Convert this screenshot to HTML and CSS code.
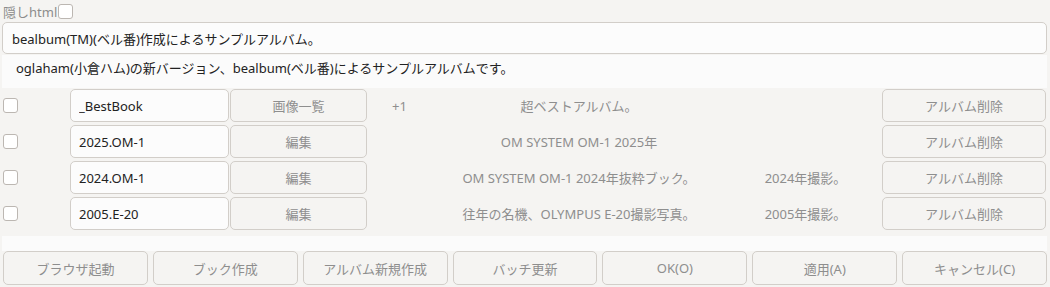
FILE: index.html
```html
<!DOCTYPE html>
<html lang="ja">
<head>
    <meta charset="UTF-8">
    <title>アルバム設定</title>
    <link rel="stylesheet" href="styles.css">
</head>
<body>
    <div class="header">
        <label class="hide-label">隠しhtml<input type="checkbox" class="check"></label>
    </div>

    <input type="text" class="title-input" value="bealbum(TM)(ベル番)作成によるサンプルアルバム。">
    <div class="note">oglaham(小倉ハム)の新バージョン、bealbum(ベル番)によるサンプルアルバムです。</div>

    <div class="albums">
        <div class="album-row">
            <div class="cell-check"><input type="checkbox" class="check"></div>
            <input type="text" class="name-input" value="_BestBook">
            <button class="btn">画像一覧</button>
            <div class="count">+1</div>
            <div class="desc">超ベストアルバム。</div>
            <div class="year"></div>
            <button class="btn">アルバム削除</button>
        </div>
        <div class="album-row">
            <div class="cell-check"><input type="checkbox" class="check"></div>
            <input type="text" class="name-input" value="2025.OM-1">
            <button class="btn">編集</button>
            <div class="count"></div>
            <div class="desc">OM SYSTEM OM-1 2025年</div>
            <div class="year"></div>
            <button class="btn">アルバム削除</button>
        </div>
        <div class="album-row">
            <div class="cell-check"><input type="checkbox" class="check"></div>
            <input type="text" class="name-input" value="2024.OM-1">
            <button class="btn">編集</button>
            <div class="count"></div>
            <div class="desc">OM SYSTEM OM-1 2024年抜粋ブック。</div>
            <div class="year">2024年撮影。</div>
            <button class="btn">アルバム削除</button>
        </div>
        <div class="album-row">
            <div class="cell-check"><input type="checkbox" class="check"></div>
            <input type="text" class="name-input" value="2005.E-20">
            <button class="btn">編集</button>
            <div class="count"></div>
            <div class="desc">往年の名機、OLYMPUS E-20撮影写真。</div>
            <div class="year">2005年撮影。</div>
            <button class="btn">アルバム削除</button>
        </div>
    </div>

    <div class="spacer"></div>

    <div class="actions">
        <button class="btn">ブラウザ起動</button>
        <button class="btn">ブック作成</button>
        <button class="btn">アルバム新規作成</button>
        <button class="btn">バッチ更新</button>
        <button class="btn">OK(O)</button>
        <button class="btn">適用(A)</button>
        <button class="btn">キャンセル(C)</button>
    </div>
</body>
</html>
```

FILE: styles.css
```css
body {
    margin: 0;
    background: #f5f4f2;
    font-family: "Noto Sans", "Noto Sans CJK JP", sans-serif;
    font-size: 13px;
    color: #333;
}

.header {
    height: 22px;
    padding-left: 3px;
}

.hide-label {
    display: flex;
    align-items: center;
    height: 22px;
    color: #8c8c8c;
    font-size: 13px;
}

.hide-label .check {
    margin-left: 1px;
}

.check {
    appearance: none;
    -webkit-appearance: none;
    width: 15px;
    height: 15px;
    margin: 0;
    border: 1px solid #bcb7b2;
    border-radius: 3px;
    background: #fff;
}

.title-input {
    display: block;
    box-sizing: border-box;
    width: 1045px;
    height: 32px;
    margin: 0 0 0 2px;
    padding: 0 9px;
    border: 1px solid #d2cec9;
    border-radius: 5px;
    background: #fcfcfc;
    font-family: inherit;
    font-size: 13px;
    color: #222;
}

.note {
    width: 1045px;
    height: 33px;
    margin: 1px 0 0 2px;
    padding-left: 14px;
    box-sizing: border-box;
    background: #fbfbfb;
    line-height: 26px;
    color: #222;
}

.albums {
    display: flex;
    flex-direction: column;
    gap: 3px;
    padding: 1px 0 6px 2px;
}

.album-row {
    display: grid;
    grid-template-columns: 68px 160px 137px 94px 236px 185px 164px;
    align-items: center;
    height: 33px;
}

.cell-check {
    display: flex;
    align-items: center;
    padding-left: 1px;
}

.name-input {
    box-sizing: border-box;
    width: 159px;
    height: 33px;
    padding: 0 8px;
    border: 1px solid #d2cec9;
    border-radius: 5px;
    background: #fcfcfc;
    font-family: inherit;
    font-size: 13px;
    color: #222;
}

.btn {
    box-sizing: border-box;
    height: 33px;
    border: 1px solid #d2cec9;
    border-radius: 5px;
    background: #f5f4f2;
    font-family: inherit;
    font-size: 13px;
    color: #8e8e8e;
    padding: 0;
}

.album-row .btn {
    width: 100%;
}

.count {
    padding-left: 25px;
    color: #8e8e8e;
}

.desc {
    text-align: center;
    color: #8e8e8e;
    white-space: nowrap;
}

.year {
    padding-left: 32px;
    text-align: center;
    color: #8e8e8e;
}

.spacer {
    width: 1045px;
    height: 15px;
    margin-left: 2px;
    background: #fbfbfb;
}

.actions {
    display: flex;
    gap: 5px;
    width: 1044px;
    margin: 0 0 0 3px;
}

.actions .btn {
    flex: 1;
    height: 34px;
}
```
